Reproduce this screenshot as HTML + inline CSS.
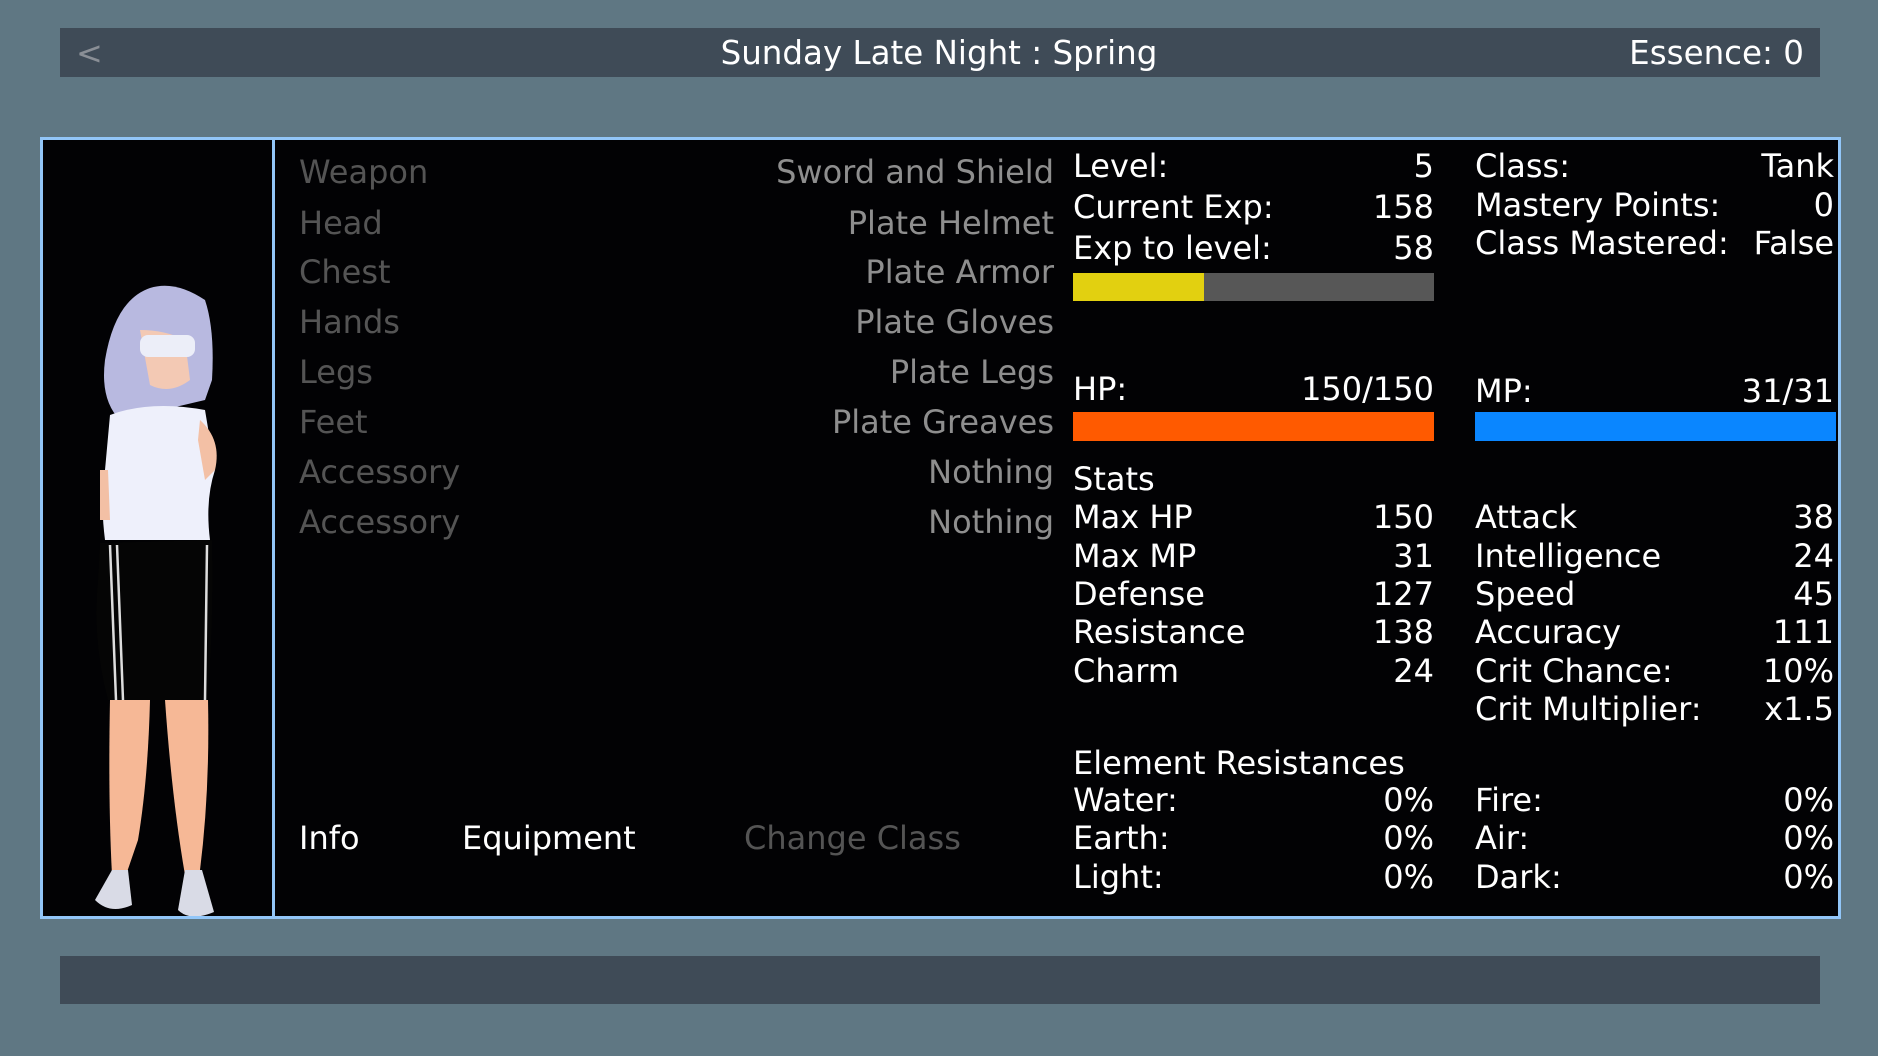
<!DOCTYPE html>
<html><head><meta charset="utf-8"><style>
body{margin:0;width:1878px;height:1056px;background:#5f7783;position:relative;overflow:hidden;font-family:"DejaVu Sans","Liberation Sans",sans-serif;}
.bar{position:absolute;left:60px;width:1760px;background:#3f4b57;}
.t{position:absolute;white-space:nowrap;font-size:32px;line-height:38px;color:#fff;transform:translateY(-19px);}
.r{text-align:right;}
.g1{color:#545454}.g2{color:#8e8e8e}
</style></head><body>
<div class="bar" style="top:28px;height:49px;"></div>
<div class="t" style="left:76px;top:53px;color:#8a8f96;font-size:32px;">&lt;</div>
<div class="t" style="left:0;width:1878px;text-align:center;top:53px;font-size:32.5px;">Sunday Late Night : Spring</div>
<div class="t r" style="right:74px;top:53px;font-size:32.5px;">Essence: 0</div>

<div style="position:absolute;left:40px;top:137px;width:1795px;height:776px;background:#020204;border:3px solid #92c6f8;"></div>
<div style="position:absolute;left:272px;top:140px;width:3px;height:776px;background:#92c6f8;"></div>
<div class="bar" style="top:956px;height:48px;"></div>

<svg style="position:absolute;left:43px;top:140px" width="229" height="776" viewBox="43 140 229 776">
<path d="M150 288 Q175 280 205 300 Q215 330 212 380 L205 400 L120 420 Q100 400 105 360 Q115 300 150 288Z" fill="#b8b9e0"/>
<path d="M140 330 Q165 330 185 340 L190 380 Q170 395 150 385 Z" fill="#f3c9b4"/>
<rect x="140" y="335" width="55" height="22" rx="8" fill="#eceef8"/>
<path d="M110 415 Q150 400 205 410 L215 470 Q205 500 210 540 L105 540 Q100 500 105 470 Z" fill="#eef0fb"/>
<path d="M100 470 L108 470 L110 520 L100 520 Z" fill="#f3c0a5"/>
<path d="M200 420 Q222 440 215 470 L205 480 L198 440Z" fill="#f3c0a5"/>
<path d="M100 543 L212 540 Q214 610 208 700 L108 700 Q92 640 98 580 Z" fill="#050505"/>
<path d="M110 545 L116 700 M117 545 L123 700 M207 545 L205 700" stroke="#ddd" stroke-width="2.5" fill="none"/>
<path d="M110 700 L150 700 Q148 780 138 840 L126 875 L112 875 Q108 800 110 700Z" fill="#f6b896"/>
<path d="M165 700 L208 700 Q210 790 200 870 L185 875 Q172 800 165 700Z" fill="#f6b896"/>
<path d="M112 870 L128 870 L132 905 Q110 915 95 900 Z" fill="#d9dbe6"/>
<path d="M185 870 L202 870 L214 912 Q190 922 178 910 Z" fill="#d9dbe6"/>
</svg>

<div class="t g1" style="left:299px;top:172px">Weapon</div>
<div class="t g1" style="left:299px;top:223px">Head</div>
<div class="t g1" style="left:299px;top:272px">Chest</div>
<div class="t g1" style="left:299px;top:322px">Hands</div>
<div class="t g1" style="left:299px;top:372px">Legs</div>
<div class="t g1" style="left:299px;top:422px">Feet</div>
<div class="t g1" style="left:299px;top:472px">Accessory</div>
<div class="t g1" style="left:299px;top:522px">Accessory</div>
<div class="t g2 r" style="right:824px;top:172px">Sword and Shield</div>
<div class="t g2 r" style="right:824px;top:223px">Plate Helmet</div>
<div class="t g2 r" style="right:824px;top:272px">Plate Armor</div>
<div class="t g2 r" style="right:824px;top:322px">Plate Gloves</div>
<div class="t g2 r" style="right:824px;top:372px">Plate Legs</div>
<div class="t g2 r" style="right:824px;top:422px">Plate Greaves</div>
<div class="t g2 r" style="right:824px;top:472px">Nothing</div>
<div class="t g2 r" style="right:824px;top:522px">Nothing</div>

<div class="t" style="left:299px;top:838px">Info</div>
<div class="t" style="left:462px;top:838px">Equipment</div>
<div class="t g1" style="left:744px;top:838px">Change Class</div>

<div class="t" style="left:1073px;top:166px">Level:</div><div class="t r" style="right:444px;top:166px">5</div>
<div class="t" style="left:1073px;top:207px">Current Exp:</div><div class="t r" style="right:444px;top:207px">158</div>
<div class="t" style="left:1073px;top:248px">Exp to level:</div><div class="t r" style="right:444px;top:248px">58</div>
<div style="position:absolute;left:1073px;top:273px;width:361px;height:28px;background:#575757"></div>
<div style="position:absolute;left:1073px;top:273px;width:131px;height:28px;background:#e2d010"></div>

<div class="t" style="left:1475px;top:166px">Class:</div><div class="t r" style="right:44px;top:166px">Tank</div>
<div class="t" style="left:1475px;top:205px">Mastery Points:</div><div class="t r" style="right:44px;top:205px">0</div>
<div class="t" style="left:1475px;top:243px">Class Mastered:</div><div class="t r" style="right:44px;top:243px">False</div>

<div class="t" style="left:1073px;top:389px">HP:</div><div class="t r" style="right:444px;top:389px">150/150</div>
<div style="position:absolute;left:1073px;top:412px;width:361px;height:29px;background:#ff5a00"></div>
<div class="t" style="left:1475px;top:391px">MP:</div><div class="t r" style="right:44px;top:391px">31/31</div>
<div style="position:absolute;left:1475px;top:412px;width:361px;height:29px;background:#0a86ff"></div>

<div class="t" style="left:1073px;top:479px">Stats</div>
<div class="t" style="left:1073px;top:517px">Max HP</div><div class="t r" style="right:444px;top:517px">150</div>
<div class="t" style="left:1073px;top:556px">Max MP</div><div class="t r" style="right:444px;top:556px">31</div>
<div class="t" style="left:1073px;top:594px">Defense</div><div class="t r" style="right:444px;top:594px">127</div>
<div class="t" style="left:1073px;top:632px">Resistance</div><div class="t r" style="right:444px;top:632px">138</div>
<div class="t" style="left:1073px;top:671px">Charm</div><div class="t r" style="right:444px;top:671px">24</div>
<div class="t" style="left:1475px;top:517px">Attack</div><div class="t r" style="right:44px;top:517px">38</div>
<div class="t" style="left:1475px;top:556px">Intelligence</div><div class="t r" style="right:44px;top:556px">24</div>
<div class="t" style="left:1475px;top:594px">Speed</div><div class="t r" style="right:44px;top:594px">45</div>
<div class="t" style="left:1475px;top:632px">Accuracy</div><div class="t r" style="right:44px;top:632px">111</div>
<div class="t" style="left:1475px;top:671px">Crit Chance:</div><div class="t r" style="right:44px;top:671px">10%</div>
<div class="t" style="left:1475px;top:709px">Crit Multiplier:</div><div class="t r" style="right:44px;top:709px">x1.5</div>

<div class="t" style="left:1073px;top:763px">Element Resistances</div>
<div class="t" style="left:1073px;top:800px">Water:</div><div class="t r" style="right:444px;top:800px">0%</div>
<div class="t" style="left:1073px;top:838px">Earth:</div><div class="t r" style="right:444px;top:838px">0%</div>
<div class="t" style="left:1073px;top:877px">Light:</div><div class="t r" style="right:444px;top:877px">0%</div>
<div class="t" style="left:1475px;top:800px">Fire:</div><div class="t r" style="right:44px;top:800px">0%</div>
<div class="t" style="left:1475px;top:838px">Air:</div><div class="t r" style="right:44px;top:838px">0%</div>
<div class="t" style="left:1475px;top:877px">Dark:</div><div class="t r" style="right:44px;top:877px">0%</div>
</body></html>
